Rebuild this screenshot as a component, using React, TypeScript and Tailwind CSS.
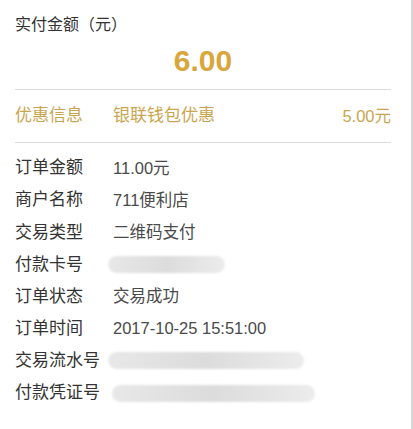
import React from "react";

const font = {
  fontFamily: '"Liberation Sans", "Noto Sans CJK SC", sans-serif',
};

type Row = { label: string; value?: string; blur?: { ml: number; w: number } };

const rows: Row[] = [
  { label: "订单金额", value: "11.00元" },
  { label: "商户名称", value: "711便利店" },
  { label: "交易类型", value: "二维码支付" },
  { label: "付款卡号", blur: { ml: 0, w: 117 } },
  { label: "订单状态", value: "交易成功" },
  { label: "订单时间", value: "2017-10-25 15:51:00" },
  { label: "交易流水号", blur: { ml: 0, w: 196 } },
  { label: "付款凭证号", blur: { ml: 4, w: 203 } },
];

function Blur({ w }: { w: number }) {
  return (
    <div
      className="h-[17px] rounded-full bg-gradient-to-r from-[#e8e8e8] via-[#dcdcdc] to-[#ececec] blur-[1px]"
      style={{ width: w }}
    />
  );
}

export default function App() {
  return (
    <div
      className="h-[429px] w-[413px] overflow-hidden border-r-2 border-[#d6d6d6] bg-white text-[17px] text-[#333]"
      style={font}
    >
      <div className="pl-[15px] pr-[20px]">
        <div className="h-[89px] pt-[13px]">
          <p className="h-[24px] text-[16px] leading-[24px]">实付金额（元）</p>
          <p className="mt-[6px] h-[36px] text-center text-[30px] font-bold leading-[36px] text-[#d8a63b]">
            6.00
          </p>
        </div>
        <div className="h-px bg-[#dcdcdc]" />
        <div className="flex h-[52px] items-center text-[#caa54f]">
          <span className="w-[98px]">优惠信息</span>
          <span className="flex-1">银联钱包优惠</span>
          <span className="text-[16.5px]">5.00元</span>
        </div>
        <div className="h-px bg-[#dcdcdc]" />
        <div className="pt-[9px]">
          {rows.map((r) => (
            <div key={r.label} className="flex h-[32.15px] items-center">
              <span className="w-[98px] shrink-0 whitespace-nowrap">{r.label}</span>
              {r.value ? (
                <span className="text-[16.5px] text-[#4a4a4a]">{r.value}</span>
              ) : r.blur ? (
                <div style={{ marginLeft: r.blur.ml - 5 }}>
                  <Blur w={r.blur.w} />
                </div>
              ) : null}
            </div>
          ))}
        </div>
      </div>
    </div>
  );
}
